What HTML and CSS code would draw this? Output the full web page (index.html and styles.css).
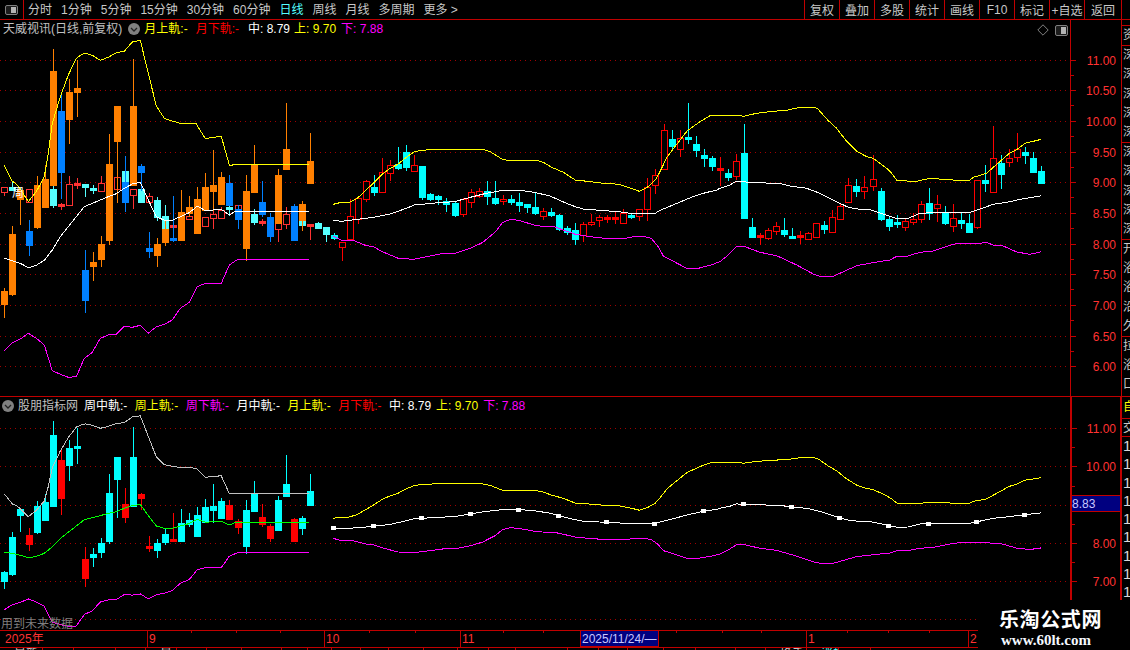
FILE: index.html
```html
<!DOCTYPE html>
<html lang="zh-CN">
<head>
<meta charset="utf-8">
<title>天威视讯 日线</title>
<link rel="stylesheet" href="styles.css">
</head>
<body>
<div class="app">
  <header class="toolbar">
    <div class="layout-btn">
      <svg class="mini-icon" width="13" height="10" viewBox="0 0 13 10"><rect x="0.5" y="0.5" width="12" height="9" rx="1.5" class="mini-frame"/><rect x="6" y="2" width="5" height="6" class="mini-fill"/></svg>
    </div>
    <nav class="periods">
      <span>分时</span><span>1分钟</span><span>5分钟</span><span>15分钟</span><span>30分钟</span><span>60分钟</span>
      <span class="active">日线</span><span>周线</span><span>月线</span><span>多周期</span><span>更多 &gt;</span>
    </nav>
    <div class="actions">
      <button>复权</button><button>叠加</button><button>多股</button><button>统计</button><button>画线</button><button>F10</button><button>标记</button><button>+自选</button><button class="last">返回</button>
    </div>
  </header>

  <section class="pane pane-main">
    <div class="plot">
      <svg id="chart-main" class="chart" width="1121" height="376" viewBox="0 20 1121 376"></svg>
      <div class="legend legend-main">
        <span class="name">天威视讯(日线,前复权)</span>
        <svg class="drop" width="12" height="12" viewBox="0 0 12 12"><circle cx="6" cy="6" r="6" class="drop-bg"/><path d="M3 5l3 3 3-3" class="drop-arrow"/></svg>
        <span class="yellow nudge-back">月上軌:-</span>
        <span class="red nudge-3">月下軌:-</span>
        <span class="white nudge-4">中: 8.79</span>
        <span class="yellow nudge-back">上: 9.70</span>
        <span class="magenta">下: 7.88</span>
      </div>
      <div class="corner-tools">
        <svg width="12" height="12" viewBox="0 0 12 12"><path d="M6 .8L11.2 6 6 11.2.8 6z" class="diamond"/></svg>
        <svg width="13" height="11" viewBox="0 0 13 11"><rect x="0.5" y="0.5" width="12" height="10" rx="1.5" class="mini-frame"/><rect x="6" y="2" width="5" height="7" class="mini-fill"/></svg>
      </div>
    </div>
    <aside class="strip">
      <div class="strip-spacer"></div>
      <div class="group"><span>资</span></div>
      <div class="group"><span>深</span><span>深</span><span>深</span><span>深</span><span>深</span></div>
      <div class="group"><span>深</span><span>深</span><span>深</span><span>深</span><span>深</span></div>
      <div class="group"><span>开</span><span>浴</span><span>浴</span><span>沿</span><span>久</span></div>
      <div class="group"><span>拉</span><span>浴</span><span>口</span></div>
    </aside>
  </section>

  <section class="pane pane-sub">
    <div class="plot">
      <svg id="chart-sub" class="chart" width="1120" height="233" viewBox="0 397 1120 233"></svg>
      <div class="legend legend-sub">
        <svg class="drop" width="12" height="12" viewBox="0 0 12 12"><circle cx="6" cy="6" r="6" class="drop-bg"/><path d="M3 5l3 3 3-3" class="drop-arrow"/></svg>
        <span class="name">股朋指标网</span>
        <span class="white">周中軌:-</span>
        <span class="yellow">周上軌:-</span>
        <span class="magenta">周下軌:-</span>
        <span class="white">月中軌:-</span>
        <span class="yellow">月上軌:-</span>
        <span class="red">月下軌:-</span>
        <span class="white">中: 8.79</span>
        <span class="yellow tight">上: 9.70</span>
        <span class="magenta tight">下: 7.88</span>
      </div>
      <div class="future-note">用到未来数据</div>
    </div>
    <aside class="strip strip-sub">
      <div class="group tall"><span class="yellow">自</span></div>
      <div class="group tab"><span>交</span></div>
      <div class="group digits"><span>1</span><span>1</span><span>1</span><span>1</span><span>1</span><span>1</span><span>1</span><span>1</span><span>1</span></div>
    </aside>
  </section>

  <footer class="timeline">
    <svg id="time-axis" width="1130" height="16" viewBox="0 631 1130 16"></svg>
  </footer>
  <div id="status" class="status"></div>

  <div class="watermark">
    <div class="wm-title">乐淘公式网</div>
    <div class="wm-url">www.60lt.com</div>
  </div>
</div>
<script src="chart.js"></script>
</body>
</html>
```

FILE: styles.css
```css
* { box-sizing: border-box; }
html, body { margin: 0; padding: 0; background: #000; }
body { font: 12px "Liberation Sans", "Noto Sans CJK SC", sans-serif; color: #c8c8c8; }

.app {
  position: relative;
  width: 1130px;
  height: 650px;
  overflow: hidden;
  background: #000;
  display: flex;
  flex-direction: column;
}

/* toolbar */
.toolbar {
  height: 20px;
  flex: none;
  display: flex;
  align-items: stretch;
  border-bottom: 1px solid #c00000;
}
.layout-btn {
  width: 24px;
  border-right: 1px solid #c00000;
  display: flex;
  align-items: center;
  justify-content: center;
}
.mini-frame { fill: #1c1c1c; stroke: #808080; }
.mini-fill { fill: #b4b4b4; }
.periods {
  margin-left: 4px;
  padding-top: 1px;
  display: flex;
  align-items: center;
  gap: 9px;
  line-height: 18px;
  white-space: nowrap;
}
.periods .active { color: #54ffff; }
.actions {
  margin-left: auto;
  margin-right: 8px;
  display: flex;
}
.actions button {
  width: 35px;
  padding: 0;
  border: 0;
  border-left: 1px solid #c00000;
  background: transparent;
  color: #c8c8c8;
  font: inherit;
  white-space: nowrap;
}
.actions .last { width: 38px; border-right: 1px solid #c00000; }

/* panes */
.pane { display: flex; flex: none; }
.pane-main { height: 377px; border-bottom: 1px solid #c00000; }
.pane-sub { height: 233px; }
.plot { position: relative; flex: 1; min-width: 0; }
.chart { display: block; shape-rendering: crispEdges; }
.chart text { shape-rendering: auto; }

/* legends */
.legend {
  position: absolute;
  top: 0;
  height: 18px;
  display: flex;
  align-items: center;
  white-space: nowrap;
  line-height: 18px;
}
.legend-main { left: 3px; gap: 5px; }
.legend-main .name { margin-right: 1px; }
.legend-sub { left: 2px; gap: 7.5px; }
.legend-sub .name { margin-left: -3.5px; margin-right: -1.5px; }
.legend-sub .tight { margin-left: -2.5px; }
.nudge-back { margin-left: -1px; }
.nudge-3 { margin-left: 3px; }
.nudge-4 { margin-left: 4px; }
.legend .name { color: #c0c0c0; }
.drop-bg { fill: #808080; }
.drop-arrow { fill: none; stroke: #222; stroke-width: 1.3; }
.yellow { color: #ffff00; }
.red { color: #ff0000; }
.white { color: #ffffff; }
.magenta { color: #ff00ff; }

.corner-tools {
  position: absolute;
  top: 4px;
  right: 53px;
  display: flex;
  align-items: center;
  gap: 6px;
}
.diamond { fill: none; stroke: #808080; }

.future-note {
  position: absolute;
  left: 1px;
  bottom: -2px;
  line-height: 16px;
  color: #7f7f7f;
}

/* right strip */
.strip {
  width: 9px;
  flex: none;
  border-left: 1px solid #c00000;
  display: flex;
  flex-direction: column;
  overflow: hidden;
  line-height: 19.4px;
}
.strip-sub { width: 10px; border-left-width: 2px; }
.strip-spacer { height: 5px; flex: none; }
.group {
  flex: none;
  display: flex;
  flex-direction: column;
  border-top: 1px solid #c00000;
  padding-left: 1px;
  white-space: nowrap;
}
.group span { height: 19.2px; }
.tall { border-top: 0; height: 21px; line-height: 20px; }
.tab { height: 19px; border-bottom: 1px solid #c00000; line-height: 18px; }
.tab span { height: 18px; }
.digits { border-top: 0; padding-top: 0; line-height: 18.3px; font-size: 15px; color: #d8d8d8; }
.digits span { height: 18.3px; }

/* timeline */
.timeline {
  height: 18px;
  flex: none;
  border-top: 1px solid #c00000;
  border-bottom: 1px solid #c00000;
}
.timeline svg { display: block; shape-rendering: crispEdges; }
.timeline svg text { shape-rendering: auto; }
.tick { stroke: #c00000; stroke-width: 1; }
.tick-thick { stroke: #c00000; stroke-width: 2; }
.grid { stroke: #a00000; stroke-width: 1; stroke-dasharray: 1 4; }
.axis-label { fill: #ff3232; font-size: 12px; text-anchor: end; }
.time-label { fill: #ff3232; font-size: 12px; }
.cursor-box { fill: #000080; stroke: #c00000; }
.cursor-label { fill: #c8c8ff; font-size: 12px; }
.price-box { fill: #000080; stroke: #c00000; }
.price-label { fill: #c8c8ff; font-size: 12px; }
.tag { fill: #fff; font-size: 12px; }

.status {
  height: 2px;
  flex: none;
  display: flex;
  overflow: hidden;
}
.status div {
  flex: none;
  height: 2px;
  border-right: 1px solid #c00000;
  overflow: hidden;
  line-height: 12px;
  padding-left: 14px;
  color: #c8c8c8;
  white-space: nowrap;
}
.status .cy { color: #54ffff; }

/* candles */
.wick { stroke-width: 1; fill: none; }
.s-cyan { stroke: #00ffff; }
.f-cyan { fill: #00ffff; }
.s-pale { stroke: #55ffff; }
.f-pale { fill: #55ffff; }
.s-red { stroke: #ff0000; }
.f-red { fill: #ff0000; }
.s-soft { stroke: #ff3232; }
.f-soft { fill: #ff3232; }
.s-orange { stroke: #ff8000; }
.f-orange { fill: #ff8000; }
.s-blue { stroke: #0080ff; }
.f-blue { fill: #0080ff; }
.hollow { fill: #000; stroke-width: 1; }
.line { fill: none; stroke-width: 1; }
.l-yellow { stroke: #ffff00; }
.l-white { stroke: #ffffff; }
.l-magenta { stroke: #ff00ff; }
.l-gray { stroke: #c0c0c0; }
.l-green { stroke: #00ff00; }
.dot { fill: #fff; }

/* watermark */
.watermark {
  position: absolute;
  left: 978px;
  top: 600px;
  width: 152px;
  height: 50px;
  background: #000;
  color: #fff;
  display: flex;
  flex-direction: column;
  padding-left: 21px;
}
.wm-title {
  margin-top: 7px;
  font: 700 20px/24px "Noto Sans CJK SC", sans-serif;
  letter-spacing: 0.6px;
  white-space: nowrap;
}
.wm-url {
  margin-top: 1px;
  margin-left: 2px;
  font: 700 15px/17px "Liberation Serif", serif;
  color: #f4f8ff;
}
```

FILE: chart.js
```js
// Price data read as [index, kind, wickTop, bodyTop, bodyBottom, wickBottom]
const baseLeft = [
  [0,'r',442,442,456,465],[1,'c',427,441,449,449],[3,'r',448,448,485,485],[6,'c',438,447,495,500],
  [7,'R',490,491,497,507],[8,'r',408,433,495,495],[9,'R',415,429,433,444],[10,'c',432,432,440,468],
  [11,'c',435,443,446,458],[12,'r',408,430,452,452],[14,'r',412,412,446,446],[15,'c',393,393,426,426],
  [16,'r',447,447,464,504],[17,'c',447,447,486,486],[18,'r',458,468,486,486],[19,'c',472,480,531,540],
  [20,'c',495,528,567,567],[21,'R',555,555,561,561],[23,'r',528,528,537,537],[25,'r',531,531,558,558],
  [26,'r',510,522,534,564],[27,'r',502,510,533,533],[28,'c',490,501,507,525],[29,'r',495,495,510,510],
  [31,'c',507,522,546,552],[32,'R',537,543,549,555],[34,'r',549,549,567,603],[35,'r',501,522,552,564],
  [37,'c',540,540,555,570],[38,'R',552,552,558,597],[39,'c',546,549,564,564],[40,'c',561,561,582,603]
];
const overlay = [
  [0,'o',745,753,792,830],[1,'o',558,582,762,765],[2,'o',449,449,477,552],[3,'b',540,573,615,645],
  [4,'o',408,435,561,564],[5,'o',376,417,501,501],[6,'o',27,93,435,435],[7,'b',165,213,396,474],
  [8,'o',118,156,237,309],[9,'o',60,144,156,228],[10,'b',630,690,780,816],[11,'o',637,666,678,720],
  [12,'o',588,612,657,678],[13,'o',282,372,600,612],[14,'o',198,198,303,486],[15,'b',348,426,486,513],
  [16,'o',57,198,435,435],[17,'b',372,378,396,450],[18,'b',576,624,633,651],[19,'o',594,612,645,678],
  [20,'o',540,567,606,615],[21,'b',468,594,600,603],[22,'o',450,516,600,600],[23,'o',468,501,519,528],
  [24,'o',441,477,579,579],[25,'o',399,441,510,510],[26,'o',330,435,453,510],[27,'o',396,411,492,492],
  [28,'b',405,429,495,495],[29,'b',495,507,537,564],[30,'o',405,453,624,660],[31,'o',315,372,456,456],
  [32,'b',423,486,522,528],[33,'b',520,531,588,603],[34,'o',387,405,549,549],[35,'o',189,327,387,387],
  [36,'b',492,498,600,600],[37,'o',483,492,540,570],[38,'o',279,363,429,429]
];
const baseRight = [
  [41,'c',400,406,414,417],[42,'r',427,427,442,480],[43,'r',298,349,418,418],[44,'r',295,295,357,369],
  [45,'r',240,244,298,303],[46,'c',225,262,275,285],[47,'r',175,217,275,275],[48,'r',180,196,218,240],
  [49,'c',140,192,203,207],[50,'c',135,156,201,211],[51,'r',165,196,212,212],[52,'c',198,198,291,297],
  [53,'c',279,282,297,300],[54,'c',285,288,297,312],[55,'c',295,304,313,333],[56,'c',306,309,345,348],
  [57,'r',295,298,342,348],[58,'r',267,276,305,321],[59,'r',264,274,288,292],[60,'c',243,273,288,312],
  [61,'c',243,294,309,312],[62,'r',285,297,304,312],[63,'c',285,297,306,312],[64,'c',279,306,315,333],
  [65,'c',312,312,321,336],[66,'c',279,321,339,342],[67,'r',324,334,347,357],[68,'c',324,336,344,348],
  [69,'c',342,345,387,390],[70,'c',378,384,396,402],[71,'c',369,390,417,432],[72,'r',366,373,406,423],
  [73,'r',343,367,373,375],[74,'r',345,352,361,378],[75,'R',345,352,355,366],[76,'R',335,350,356,370],
  [77,'r',327,339,368,368],[78,'c',339,345,350,354],[79,'r',327,328,349,360],[80,'r',234,262,328,360],
  [81,'r',208,226,256,279],[82,'r',72,91,206,206],[83,'c',90,118,137,145],[84,'r',90,115,148,168],
  [85,'c',9,111,117,130],[86,'c',108,132,150,168],[87,'c',147,165,173,198],[88,'c',168,174,198,210],
  [89,'R',171,204,206,255],[90,'c',207,219,231,240],[91,'r',162,184,227,237],[92,'c',72,159,354,354],
  [93,'c',354,381,411,411],[94,'R',400,405,410,432],[95,'r',384,391,414,417],[96,'r',366,378,392,402],
  [97,'c',354,390,402,408],[98,'c',384,408,414,414],[99,'R',393,406,410,429],[100,'r',397,400,418,418],
  [101,'r',369,370,410,410],[102,'c',363,375,387,399],[103,'r',330,351,395,395],[104,'r',312,318,357,357],
  [105,'r',234,256,305,305],[106,'c',237,258,273,288],[107,'r',228,262,272,294],[108,'r',165,238,257,270],
  [109,'c',264,273,357,360],[110,'c',350,357,378,390],[111,'c',345,366,372,382],[112,'r',354,363,380,390],
  [113,'r',339,357,365,372],[114,'r',303,313,357,366],[115,'c',264,309,339,357],[116,'r',285,313,323,363],
  [117,'c',318,336,369,372],[118,'r',312,355,377,393],[119,'c',336,360,369,384],[120,'c',342,369,396,396],
  [121,'r',240,240,381,384],[122,'c',195,240,249,273],[123,'r',78,175,275,275],[124,'c',165,189,222,264],
  [125,'r',148,174,186,198],[126,'r',99,148,172,183],[127,'c',141,156,165,189],[128,'c',156,174,216,216],
  [129,'c',198,213,249,249]
];

// Band lines, in page pixels
const L = pts => pts.map(([x, y]) => [x / 3, y / 3 + 40]);
const M = pts => pts.map(([x, y]) => [x / 3 + 330, y / 3 + 100]);
const R = pts => pts.map(([x, y]) => [x / 3 + 720, y / 3 + 100]);

const upperLeft = L([[13,376],[25,400],[37,424],[49,432],[61,447],[85,485],[109,455],[133,410],[145,340],[157,250],[181,170],[205,105],[229,55],[245,43],[257,40],[277,46],[301,61],[325,52],[349,38],[373,34],[397,6],[421,1],[445,100],[469,198],[493,235],[517,243],[541,250],[589,252],[616,296],[640,292],[664,289],[688,375],[698,375],[700,373],[927,373]]);
const midLeft = L([[13,655],[37,662],[61,670],[85,683],[109,676],[133,661],[157,630],[181,590],[205,560],[229,530],[253,500],[277,490],[301,480],[325,470],[349,461],[373,445],[397,432],[421,427],[445,480],[469,530],[493,541],[517,541],[541,530],[568,518],[592,498],[616,512],[664,508],[688,525],[705,514],[927,514]]);
const lowerLeft = L([[13,932],[37,908],[61,897],[85,880],[109,895],[133,915],[157,992],[181,1003],[205,1012],[229,1010],[253,955],[277,937],[301,895],[325,885],[349,883],[373,859],[397,862],[421,856],[445,880],[469,860],[493,853],[517,840],[541,805],[568,787],[592,740],[616,730],[664,730],[688,675],[712,659],[927,659]]);

const upperRight = M([[10,313],[34,307],[58,307],[82,295],[106,272],[130,250],[157,222],[181,205],[205,192],[229,172],[253,155],[277,151],[313,148],[457,148],[481,155],[517,178],[532,181],[620,181],[640,187],[665,202],[700,217],[736,240],[772,244],[820,250],[868,253],[910,267],[928,274],[952,262],[976,240],[988,219],[1012,170],[1048,123],[1072,92],[1110,65],[1140,47],[1160,46]]).concat(R([[0,46],[60,46],[70,49],[110,40],[160,34],[200,31],[240,22],[280,22],[292,25],[325,62],[350,85],[375,118],[410,154],[440,170],[460,175],[500,205],[515,220],[532,242],[590,244],[615,238],[640,235],[665,238],[715,241],[750,240],[760,232],[800,220],[820,202],[868,160],[892,148],[915,130],[940,124],[964,118]]));
const midRight = M([[10,361],[34,364],[82,358],[130,352],[181,342],[229,325],[253,315],[277,313],[325,308],[373,305],[421,292],[469,280],[513,272],[577,272],[613,277],[660,288],[709,310],[736,320],[760,327],[808,331],[868,335],[900,340],[976,340],[988,332],[1036,312],[1084,292],[1120,280],[1160,270]]).concat(R([[0,265],[30,255],[48,244],[90,247],[130,247],[140,250],[185,252],[210,258],[260,265],[300,280],[345,303],[385,322],[420,328],[450,329],[490,342],[530,356],[565,355],[600,340],[640,338],[750,337],[770,330],[800,320],[820,313],[870,305],[900,298],[930,293],[964,287]]));
const lowerRight = M([[10,409],[34,421],[70,421],[106,436],[130,440],[157,455],[205,475],[250,478],[300,468],[340,460],[375,460],[420,445],[457,428],[497,395],[517,368],[541,358],[565,361],[613,375],[636,379],[672,380],[700,390],[736,403],[772,409],[824,415],[888,415],[916,409],[940,409],[964,415],[985,440],[1000,468],[1030,484],[1070,505],[1105,505],[1140,496]]).concat(R([[0,485],[25,465],[48,441],[72,439],[120,457],[170,467],[230,495],[280,522],[300,529],[340,529],[410,497],[470,486],[510,480],[530,469],[560,469],[600,457],[640,453],[700,433],[720,430],[780,430],[800,427],[820,436],[845,436],[890,456],[930,463],[964,455]]));

const stepX = i => Math.round(4.4 + 8.038 * i);
const toSub = y => 428.3 + 0.6248 * (y - 60.3);

const candleKinds = {
  c: ['s-cyan', 'f-cyan', false], r: ['s-red', '', true], R: ['s-red', 'f-red', false],
  C: ['s-pale', 'f-pale', false], h: ['s-soft', '', true], H: ['s-soft', 'f-soft', false],
  o: ['s-orange', 'f-orange', false], b: ['s-blue', 'f-blue', false]
};

function candle(i, kind, wt, bt, bb, wb) {
  const x = stepX(i);
  const [st, fl, hollow] = candleKinds[kind];
  let h = Math.max(Math.round(bb) - Math.round(bt), 2);
  const top = Math.round(bt);
  let out = `<line class="wick ${st}" x1="${x + 0.5}" x2="${x + 0.5}" y1="${Math.round(wt)}" y2="${Math.round(wb) + 1}"/>`;
  out += hollow
    ? `<rect class="hollow ${st}" x="${x - 2.5}" y="${top + 0.5}" width="6" height="${h}"/>`
    : `<rect class="${fl}" x="${x - 3}" y="${top}" width="7" height="${h + 1}"/>`;
  return out;
}

const poly = (pts, cls, map) => `<polyline class="line ${cls}" points="${pts.map(([x, y]) => x.toFixed(1) + ',' + (map ? map(y) : y).toFixed(1)).join(' ')}"/>`;

const gridLine = y => `<line class="grid" x1="0" x2="1067" y1="${y + 0.5}" y2="${y + 0.5}"/>`;
const tick = (x1, x2, y) => `<line class="tick" x1="${x1}" x2="${x2}" y1="${y + 0.5}" y2="${y + 0.5}"/>`;

function mainChart() {
  const ys = [60, 90, 121, 152, 182, 213, 244, 274, 305, 336, 366];
  const labels = ['11.00', '10.50', '10.00', '9.50', '9.00', '8.50', '8.00', '7.50', '7.00', '6.50', '6.00'];
  let s = ys.map(gridLine).join('');
  s += `<line class="tick" x1="1070.5" x2="1070.5" y1="20" y2="396"/>`;
  ys.forEach((y, n) => {
    s += tick(1070, 1076, y);
    if (n < ys.length - 1) s += tick(1070, 1074, y + 15);
    s += `<text class="axis-label" x="1116" y="${y + 5}">${labels[n]}</text>`;
  });
  const yL = v => v / 3 + 40, yR = v => v / 3 + 100;
  baseLeft.forEach(([i, k, a, b, c, d]) => {
    const kind = k === 'c' ? 'C' : k === 'r' ? 'h' : 'H';
    s += candle(i, kind, yL(a), yL(b), yL(c), yL(d));
  });
  overlay.forEach(([i, k, a, b, c, d]) => { s += candle(i, k, yL(a), yL(b), yL(c), yL(d)); });
  baseRight.forEach(([i, k, a, b, c, d]) => { s += candle(i, k, yR(a), yR(b), yR(c), yR(d)); });
  s += poly(upperLeft, 'l-yellow') + poly(midLeft, 'l-white') + poly(lowerLeft, 'l-magenta');
  s += poly(upperRight, 'l-yellow') + poly(midRight, 'l-white') + poly(lowerRight, 'l-magenta');
  s += `<text class="tag" x="12" y="197">周</text>`;
  document.getElementById('chart-main').innerHTML = s;
}

function subChart() {
  const ys = [428, 466, 505, 543, 581, 619];
  let s = ys.map(gridLine).join('');
  s += `<line class="tick-thick" x1="1071" x2="1071" y1="397" y2="630"/>`;
  [[428, '11.00'], [466, '10.00'], [543, '8.00'], [581, '7.00']].forEach(([y, t]) => {
    s += tick(1071, 1077, y);
    s += `<text class="axis-label" x="1116" y="${y + 5}">${t}</text>`;
  });
  [447, 486, 524, 562].forEach(y => { s += tick(1071, 1075, y); });
  s += `<rect class="price-box" x="1071.5" y="495.5" width="49" height="16"/>`;
  s += `<text class="price-label" x="1072" y="508">8.83</text>`;
  const y = v => toSub(v / 3 + 40);
  overlay.forEach(([i, k, a, b, c, d]) => {
    s += candle(i, k === 'o' ? 'c' : 'R', y(a), y(b), y(c), y(d));
  });
  s += poly(upperLeft, 'l-gray', toSub) + poly(midLeft, 'l-green', toSub) + poly(lowerLeft, 'l-magenta', toSub);
  s += poly(upperRight, 'l-yellow', toSub) + poly(midRight, 'l-white', toSub) + poly(lowerRight, 'l-magenta', toSub);
  const yAt = x => {
    for (let n = 1; n < midRight.length; n++) {
      if (midRight[n][0] >= x) {
        const [x0, y0] = midRight[n - 1], [x1, y1] = midRight[n];
        return toSub(y0 + (y1 - y0) * (x - x0) / (x1 - x0));
      }
    }
    return toSub(midRight[midRight.length - 1][1]);
  };
  [41, 46, 52, 58, 64, 69, 75, 81, 87, 92, 98, 104, 110, 115, 121, 127].forEach(i => {
    const x = stepX(i);
    s += `<rect class="dot" x="${x - 3}" y="${Math.round(yAt(x)) - 2}" width="5" height="4"/>`;
  });
  document.getElementById('chart-sub').innerHTML = s;
}

function timeAxis() {
  let s = '';
  [147, 324, 460, 806, 968].forEach(x => {
    s += `<line class="tick" x1="${x + 0.5}" x2="${x + 0.5}" y1="631" y2="647"/>`;
  });
  [191, 236, 280, 369, 415, 503, 543, 589, 631, 676, 722, 761, 847, 888, 929].forEach(x => {
    s += `<line class="tick" x1="${x + 0.5}" x2="${x + 0.5}" y1="631" y2="633"/>`;
  });
  [['2025年', 5], ['9', 149], ['10', 326], ['11', 462], ['1', 808], ['2', 970]].forEach(([t, x]) => {
    s += `<text class="time-label" x="${x}" y="643">${t}</text>`;
  });
  s += `<rect class="cursor-box" x="580.5" y="630.5" width="78" height="16"/>`;
  s += `<text class="cursor-label" x="582" y="643">2025/11/24/—</text>`;
  document.getElementById('time-axis').innerHTML = s;
}

function statusRow() {
  const edges = [43, 74, 116, 146, 177, 207, 242, 282, 308, 332, 361, 389, 424, 458, 489, 516, 568, 599, 628, 664, 696, 736, 766, 807, 839, 871];
  const texts = { 0: '最新', 4: '量', 23: '换手', 24: '涨幅' };
  const host = document.getElementById('status');
  let prev = 0;
  edges.forEach((edge, n) => {
    const cell = document.createElement('div');
    cell.style.width = (edge - prev) + 'px';
    if (texts[n]) cell.textContent = texts[n];
    if (n === 24) cell.className = 'cy';
    host.appendChild(cell);
    prev = edge;
  });
}

mainChart();
subChart();
timeAxis();
statusRow();
```
